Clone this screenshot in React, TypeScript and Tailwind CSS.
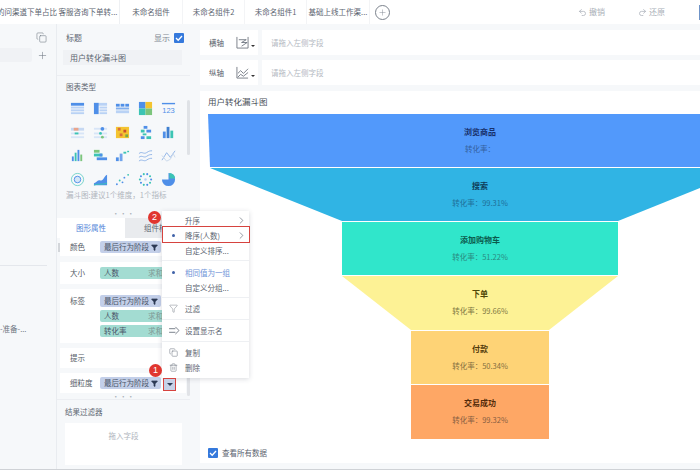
import { ChevronRight, Copy, Filter, Plus, Redo2, Trash2, Undo2 } from "lucide-react";

const FONT = "font-['Noto_Sans_CJK_SC','Noto_Sans',sans-serif]";

const TABS = [
  { label: "的问渠道下单占比", cls: "w-[57px] justify-end overflow-hidden" },
  { label: "客服咨询下单转...", cls: "w-[63px] justify-center border-r border-[#eef0f3]" },
  { label: "未命名组件", cls: "w-[63px] justify-center border-r border-[#f3f4f6]" },
  { label: "未命名组件2", cls: "w-[62px] justify-center border-r border-[#f3f4f6]" },
  { label: "未命名组件1", cls: "w-[62px] justify-center border-r border-[#f3f4f6]" },
  { label: "基础上线工作渠...", cls: "w-[63px] justify-center border-r border-[#f3f4f6]" },
];

const FUNNEL = [
  { name: "浏览商品", rate: "转化率：", y: 0, pts: "0,0 544,0 542,53 2,53", fill: "#5299fb", ink: "#17306b", sub: "#34619f" },
  { name: "搜索", rate: "转化率：99.31%", y: 54, pts: "2,54 542,54 410,107 134,107", fill: "#30b4e4", ink: "#0f3d59", sub: "#1f6f99" },
  { name: "添加购物车", rate: "转化率：51.22%", y: 108, pts: "134,108 410,108 410,161 134,161", fill: "#30e6cb", ink: "#0b5a4d", sub: "#2a8a80" },
  { name: "下单", rate: "转化率：99.66%", y: 162, pts: "134,162 410,162 341,216 203,216", fill: "#fdf295", ink: "#4f4708", sub: "#7d7842" },
  { name: "付款", rate: "转化率：50.34%", y: 217, pts: "203,217 341,217 341,270 203,270", fill: "#fed376", ink: "#51390a", sub: "#857041" },
  { name: "交易成功", rate: "转化率：99.32%", y: 271, pts: "203,271 341,271 341,325 203,325", fill: "#fea765", ink: "#532a0a", sub: "#875e42" },
];

function ChartIcon({ n }: { n: number }) {
  const b = "#4f8fe8";
  const l = "#b9d2f5";
  const t = "#3cc4b4";
  const y = "#f4c430";
  const shapes: Record<number, React.ReactNode> = {
    0: (<><rect x="1" y="2" width="14" height="3" fill={b} /><rect x="1" y="6" width="14" height="2" fill={l} /><rect x="1" y="9" width="14" height="2" fill={l} /><rect x="1" y="12" width="14" height="2" fill={l} /></>),
    1: (<><rect x="1" y="2" width="14" height="3" fill={l} /><rect x="1" y="2" width="5" height="12" fill={b} /><rect x="7" y="6" width="8" height="2" fill={l} /><rect x="7" y="9" width="8" height="2" fill={l} /><rect x="7" y="12" width="8" height="2" fill={l} /></>),
    2: (<><rect x="1" y="3" width="4" height="3" fill={b} /><rect x="6" y="3" width="4" height="3" fill={b} /><rect x="11" y="3" width="4" height="3" fill={b} /><rect x="1" y="7" width="14" height="2" fill={b} opacity=".7" /><rect x="1" y="10" width="14" height="3" fill={l} /></>),
    3: (<><rect x="1" y="1" width="7" height="7" fill={b} /><rect x="8" y="1" width="7" height="7" fill={y} /><rect x="1" y="8" width="7" height="7" fill={t} /><rect x="8" y="8" width="7" height="7" fill="#7cc57c" /></>),
    4: (<><rect x="1" y="2" width="14" height="1.5" fill={b} /><text x="8" y="13" fontSize="8" textAnchor="middle" fill={b} fontFamily="Liberation Sans">123</text></>),
    5: (<><rect x="1" y="3" width="14" height="3" fill="#c6d8f2" /><rect x="4" y="3" width="5" height="3" fill="#eaa48a" /><rect x="1" y="8" width="14" height="2" fill="#d8e5f7" /><rect x="1" y="12" width="14" height="2" fill="#d8e5f7" /><rect x="5" y="8" width="4" height="2" fill={t} /></>),
    6: (<><rect x="1" y="3" width="14" height="2" fill="#d8e5f7" /><circle cx="10" cy="4" r="2" fill={b} /><rect x="1" y="8" width="14" height="2" fill="#d8e5f7" /><circle cx="8" cy="9" r="1.5" fill={t} /><rect x="1" y="12" width="14" height="2" fill="#d8e5f7" /><circle cx="10" cy="13" r="1.5" fill="#7cc57c" /></>),
    7: (<><rect x="1" y="2" width="14" height="12" fill={y} /><rect x="3" y="3" width="3" height="3" fill="#d9703a" /><rect x="9" y="5" width="3" height="3" fill="#c9502e" /><rect x="5" y="9" width="3" height="3" fill="#d9703a" /><rect x="11" y="10" width="3" height="3" fill="#7aa846" /></>),
    8: (<><rect x="6" y="1" width="4" height="3" fill={b} /><rect x="3" y="5" width="4" height="3" fill={t} /><rect x="9" y="5" width="5" height="3" fill={b} /><rect x="5" y="9" width="4" height="2" fill={t} /><rect x="3" y="12" width="4" height="3" fill={b} /><rect x="9" y="12" width="5" height="3" fill={t} /></>),
    9: (<><rect x="2" y="7" width="3" height="7" fill={b} /><rect x="6" y="2" width="3" height="12" fill="#3f7fd0" /><rect x="10" y="6" width="3" height="8" fill={t} /></>),
    10: (<><rect x="2" y="9" width="2" height="5" fill={b} /><rect x="5" y="5" width="2" height="9" fill={t} /><rect x="8" y="2" width="2" height="12" fill={b} /><rect x="11" y="7" width="2" height="7" fill="#7cc57c" /></>),
    11: (<><rect x="1" y="2" width="6" height="3" fill="#7cc57c" /><rect x="1" y="6" width="9" height="3" fill={t} /><rect x="7" y="6" width="3" height="3" fill={b} /><rect x="4" y="10" width="11" height="3" fill={b} /></>),
    12: (<><rect x="1" y="10" width="3" height="4" fill={b} /><rect x="5" y="6" width="3" height="8" fill={b} opacity=".8" /><rect x="9" y="4" width="3" height="2" fill={t} /><rect x="13" y="3" width="2" height="1.5" fill={t} /></>),
    13: (<><path d="M1 6c3-3 5 1 8-1s4-2 6-2M1 10c3-3 5 1 8-1s4-2 6-2M1 14c3-3 5 1 8-1s4-2 6-2" fill="none" stroke="#8fb3e6" strokeWidth="1" /></>),
    14: (<><path d="M1 13 6 5l4 5 5-7" fill="none" stroke="#8fb3e6" strokeWidth="1" /><path d="M1 8l5 6 4-2 3-6 2 4" fill="none" stroke="#c9d7ea" strokeWidth="1" /></>),
    15: (<><circle cx="8" cy="8" r="6.5" fill="none" stroke={t} strokeWidth="1" opacity=".7" /><circle cx="8" cy="8" r="3.5" fill="#d4e6f7" stroke={b} strokeWidth="1" /></>),
    16: (<><path d="M1 12c3-1 4-4 7-3s4-5 7-6v11H1z" fill={b} /><path d="M1 14c4-2 8 0 14-2" fill="none" stroke={t} strokeWidth="1" /></>),
    17: (<><circle cx="2" cy="13" r="1" fill={b} /><circle cx="5" cy="9" r="1" fill={t} /><circle cx="8" cy="11" r="1" fill={b} /><circle cx="10" cy="6" r="1" fill={b} /><circle cx="14" cy="3" r="1" fill={t} /></>),
    18: (<>{Array.from({ length: 10 }, (_, i) => (<circle key={i} cx={8 + 6 * Math.cos((i * Math.PI) / 5)} cy={8 + 6 * Math.sin((i * Math.PI) / 5)} r="1.1" fill={i % 2 ? t : b} />))}<circle cx="8" cy="8" r="1.3" fill={l} /></>),
    19: (<><path d="M8 8V1a7 7 0 1 1-7 7z" fill={b} /><path d="M9 7V1a6 6 0 0 1 6 6z" fill={t} /></>),
  };
  return <svg viewBox="0 0 16 16" className="w-[15px] h-[15px]">{shapes[n]}</svg>;
}

function Pill({ label, tone, agg }: { label: string; tone: "blue" | "teal"; agg?: string }) {
  if (tone === "teal") {
    return (
      <div className="flex h-[12px] w-[80px] items-center whitespace-nowrap rounded-[2px] bg-[#a3dcd2] pl-[4px] text-[7.5px] text-[#4a5568]">
        <span className="w-[44px]">{label}</span>
        <span className="text-[#7f9a96]">{agg}</span>
      </div>
    );
  }
  return (
    <div className="flex h-[12px] w-[61px] items-center justify-between whitespace-nowrap rounded-[2px] bg-[#c3cfe9] pl-[4px] pr-[3px] text-[7.5px] text-[#4a5568]">
      <span>{label}</span>
      <Filter size={7} fill="#2d3a55" stroke="#2d3a55" />
    </div>
  );
}

function PropRow({ label, className, children }: { label: string; className: string; children?: React.ReactNode }) {
  return (
    <div className={`flex bg-white pl-[10px] ${className}`}>
      <span className="w-[30px] shrink-0 text-[7.5px] text-[#555c66]">{label}</span>
      <div className="flex flex-col gap-[3px]">{children}</div>
    </div>
  );
}

function Handle({ className }: { className: string }) {
  return <div className={`text-center text-[7px] leading-[5px] tracking-[0.5px] text-[#a9afb8] ${className}`}>•••</div>;
}

function MenuItem({ label, h, dot, arrow, icon, blue }: { label: string; h: string; dot?: boolean; arrow?: boolean; icon?: React.ReactNode; blue?: boolean }) {
  return (
    <div className={`flex items-center ${h} pl-[7px] pr-[2px] text-[7.5px] ${blue ? "text-[#6f94d8]" : "text-[#5c6470]"}`}>
      <span className="flex w-[16px] shrink-0 items-center text-[#6d7580]">
        {dot ? <span className="ml-[3px] h-[3px] w-[3px] rounded-full bg-[#3f62a8]" /> : icon}
      </span>
      <span className="flex-1 whitespace-nowrap">{label}</span>
      {arrow ? <ChevronRight size={11} strokeWidth={1.4} className="text-[#5c6470]" /> : null}
    </div>
  );
}

function AxisRow({ label, icon }: { label: string; icon: React.ReactNode }) {
  return (
    <div className="flex h-[25px] gap-[4px]">
      <div className="flex w-[58px] items-center bg-white pl-[9px] text-[7.5px] text-[#555c66]">
        <span className="w-[27px]">{label}</span>
        {icon}
        <span className="ml-[2px] mt-[7px] h-0 w-0 border-x-[2px] border-t-[2px] border-x-transparent border-t-[#333]" />
      </div>
      <div className="flex flex-1 items-center bg-white pl-[9px] text-[7.5px] text-[#b4b9c1]">请拖入左侧字段</div>
    </div>
  );
}

export default function App() {
  return (
    <div className={`relative flex h-[470px] w-[700px] flex-col overflow-hidden bg-[#f6f8fa] ${FONT}`}>
      {/* tab bar */}
      <header className="flex h-[24px] shrink-0 items-center bg-white text-[7.5px] text-[#5c6470]">
        {TABS.map((tab) => (
          <div key={tab.label} className={`flex h-full items-center whitespace-nowrap ${tab.cls}`}>{tab.label}</div>
        ))}
        <span className="ml-[5px] flex h-[15px] w-[15px] items-center justify-center rounded-full border border-[#7b828c] text-[#7b828c]">
          <Plus size={9} strokeWidth={1.2} />
        </span>
        <div className="ml-auto flex items-center gap-[33px] pr-[34px] text-[8px] text-[#a9afb8]">
          <span className="flex items-center gap-[2px]"><Undo2 size={9} />撤销</span>
          <span className="flex items-center gap-[2px]"><Redo2 size={9} />还原</span>
        </div>
        <span className="h-[15px] w-[1px] bg-[#6f94c8]" />
      </header>

      <div className="flex min-h-0 flex-1">
        {/* data column */}
        <aside className="flex w-[57px] shrink-0 flex-col border-r border-[#e9ecf0] pt-[8px] text-[#6d7580]">
          <div className="flex justify-end pr-[9px]"><Copy size={11} strokeWidth={1.2} /></div>
          <div className="mt-[5px] flex items-center">
            <div className="h-[14px] w-[32px] rounded-r-[2px] bg-[#f0f2f5]" />
            <Plus size={11} strokeWidth={1.2} className="ml-[5px]" />
          </div>
          <div className="mt-[203px] mr-[9px] h-[1px] bg-[#e4e7ec]" />
          <div className="mt-[57px] whitespace-nowrap text-[7.5px] text-[#6d7580]">-准备-...</div>
        </aside>

        {/* settings column */}
        <section className="relative flex w-[133px] shrink-0 flex-col">
          <div className="h-[46px] pl-[9px] pr-[8px] pt-[7px]">
            <div className="-mr-[2px] flex h-[14px] items-center justify-between text-[8px] text-[#606772]">
              <span>标题</span>
              <span className="flex items-center gap-[4px] text-[#7f8792]">
                显示
                <span className="flex h-[10px] w-[10px] items-center justify-center rounded-[1px] bg-[#3579dc]">
                  <svg viewBox="0 0 10 10" className="h-[10px] w-[10px]"><path d="M2 5l2.2 2.2L8 3" fill="none" stroke="#fff" strokeWidth="1.3" /></svg>
                </span>
              </span>
            </div>
            <div className="-ml-[3px] mt-[5px] flex h-[15px] items-center bg-[#f0f2f5] pl-[7px] text-[8px] text-[#5c6470]">用户转化漏斗图</div>
          </div>
          <div className="mt-[5px] h-[135px] border-t border-[#eceef2] px-[9px] pt-[4px]">
            <div className="text-[7.5px] leading-[14px] text-[#606772]">图表类型</div>
            <div className="mt-[7px] grid grid-cols-5 gap-y-[8.5px] pr-[1px]">
              {Array.from({ length: 20 }, (_, i) => (
                <div key={i} className="flex justify-center"><ChartIcon n={i} /></div>
              ))}
            </div>
            <div className="mt-[2px] whitespace-nowrap text-[7.5px] text-[#b0b5bd]">漏斗图:建议1个维度，1个指标</div>
          </div>
          <Handle className="mt-[1px]" />
          <div className="mt-[2px] flex h-[20px] text-[7.5px]">
            <div className="flex w-[68px] items-center justify-center bg-white text-[#4f84d8]">图形属性</div>
            <div className="flex flex-1 items-center bg-[#e9ebee] pl-[19px] text-[#5c6470]">组件样式</div>
          </div>
          <div className="flex flex-col pl-[3px] pr-[4px]">
            <PropRow label="颜色" className="h-[18px] items-center"><Pill label="最后行为阶段" tone="blue" /></PropRow>
            <PropRow label="大小" className="mt-[6px] h-[22px] items-center"><Pill label="人数" tone="teal" agg="求和" /></PropRow>
            <PropRow label="标签" className="mt-[5px] h-[54px] pt-[6px]">
              <Pill label="最后行为阶段" tone="blue" />
              <Pill label="人数" tone="teal" agg="求和" />
              <Pill label="转化率" tone="teal" agg="求和" />
            </PropRow>
            <PropRow label="提示" className="mt-[5px] h-[20px] items-center" />
            <PropRow label="细粒度" className="mt-[5px] h-[20px] items-center"><Pill label="最后行为阶段" tone="blue" /></PropRow>
          </div>
          <Handle className="mt-[1px]" />
          <div className="flex min-h-0 flex-1 flex-col border-t border-[#eceef2] px-[8px] pt-[5px]">
            <div className="text-[7.5px] leading-[14px] text-[#606772]">结果过滤器</div>
            <div className="mb-[4px] mt-[4px] flex flex-1 justify-center bg-white pt-[7px] text-[7.5px] text-[#b0b5bd]">拖入字段</div>
          </div>
          {/* panel scrollbars and grip */}
          <span className="absolute right-0 top-[76px] h-[55px] w-[3px] rounded bg-[#dfe2e6]" />
          <span className="absolute right-0 top-[216px] h-[156px] w-[3px] rounded bg-[#e1e3e7]" />
          <span className="absolute left-[1px] top-[219px] h-[9px] w-[2px] bg-[#d3d6da]" />
        </section>

        {/* canvas */}
        <main className="ml-[10px] flex min-w-0 flex-1 flex-col pb-[6px] pt-[6px]">
          <div className="flex flex-col gap-[5px]">
            <AxisRow label="横轴" icon={<svg viewBox="0 0 14 14" className="h-[13px] w-[13px]"><path d="M1 1v12h12V1" fill="none" stroke="#666d78" strokeWidth=".9" /><path d="M3 4h8L6 7h6l-6 4" fill="none" stroke="#666d78" strokeWidth=".9" /></svg>} />
            <AxisRow label="纵轴" icon={<svg viewBox="0 0 14 14" className="h-[13px] w-[13px]"><path d="M1 1v12h12" fill="none" stroke="#666d78" strokeWidth=".9" /><path d="M2 8l3-3 3 3 5-5M2 12l3-3 3 2 5-4" fill="none" stroke="#666d78" strokeWidth=".9" /></svg>} />
          </div>
          <div className="mt-[6px] flex min-h-0 flex-1 flex-col bg-white pl-[8px]">
            <div className="h-[23px] pt-[2px] text-[8.5px] leading-[16px] text-[#4a5058]">用户转化漏斗图</div>
            <svg viewBox="0 0 492 325" className="h-[325px] w-[492px] shrink-0 overflow-hidden">
              {FUNNEL.map((row) => (
                <g key={row.name}>
                  <polygon points={row.pts} fill={row.fill} />
                  <text x="272" y={row.y + 21} textAnchor="middle" fontSize="8" fontWeight="700" fill={row.ink}>{row.name}</text>
                  <text x="272" y={row.y + 38} textAnchor="middle" fontSize="7.5" fill={row.sub}>{row.rate}</text>
                </g>
              ))}
            </svg>
            <div className="mt-[8px] flex items-center gap-[4px] text-[7.5px] text-[#5c6470]">
              <span className="flex h-[10px] w-[10px] items-center justify-center rounded-[1px] bg-[#3579dc]">
                <svg viewBox="0 0 10 10" className="h-[10px] w-[10px]"><path d="M2 5l2.2 2.2L8 3" fill="none" stroke="#fff" strokeWidth="1.3" /></svg>
              </span>
              查看所有数据
            </div>
          </div>
        </main>
      </div>
      <div className="h-[1px] shrink-0 bg-[#cfd2d6]" />

      {/* context menu over the settings column */}
      <div className="absolute left-[162px] top-[211px] z-10 w-[87px] bg-white shadow-[0_1px_5px_rgba(40,50,70,0.18)]">
        <div className="pt-[2px]">
          <MenuItem label="升序" h="h-[15px]" arrow />
          <MenuItem label="降序(人数)" h="h-[15px]" dot arrow />
          <MenuItem label="自定义排序..." h="h-[15px]" />
        </div>
        <div className="mt-[2px] border-t border-[#eef0f3] pt-[4px]">
          <MenuItem label="相同值为一组" h="h-[15px]" dot blue />
          <MenuItem label="自定义分组..." h="h-[15px]" />
        </div>
        <div className="mt-[2px] border-t border-[#eef0f3]">
          <MenuItem label="过滤" h="h-[21px]" icon={<Filter size={9} strokeWidth={1.2} />} />
        </div>
        <div className="border-t border-[#eef0f3]">
          <MenuItem label="设置显示名" h="h-[21px]" icon={<svg viewBox="0 0 12 10" className="h-[9px] w-[11px]"><path d="M0 3h7M0 7h7M7 1l4 4-4 4" fill="none" stroke="#6d7580" strokeWidth="1" /></svg>} />
        </div>
        <div className="border-t border-[#eef0f3] pb-[3px] pt-[3px]">
          <MenuItem label="复制" h="h-[15px]" icon={<Copy size={9} strokeWidth={1.4} />} />
          <MenuItem label="删除" h="h-[15px]" icon={<Trash2 size={9} strokeWidth={1.4} />} />
        </div>
      </div>

      {/* tutorial annotations */}
      <span className="absolute left-[162px] top-[226px] z-20 h-[17px] w-[88px] border-[1.5px] border-[#d6433f]" />
      <span className="absolute left-[148px] top-[211px] z-20 flex h-[13px] w-[13px] items-center justify-center rounded-full bg-[#e0352f] font-['Liberation_Sans',sans-serif] text-[9px] text-white">2</span>
      <span className="absolute left-[149px] top-[364px] z-20 flex h-[13px] w-[13px] items-center justify-center rounded-full bg-[#e0352f] font-['Liberation_Sans',sans-serif] text-[9px] text-white">1</span>
      <span className="absolute left-[163px] top-[378px] z-20 flex h-[13px] w-[13px] items-center justify-center border-[1.5px] border-[#d6433f] bg-[#c6d1e8]">
        <span className="h-0 w-0 border-x-[3px] border-t-[3px] border-x-transparent border-t-[#2d3a55]" />
      </span>
    </div>
  );
}
